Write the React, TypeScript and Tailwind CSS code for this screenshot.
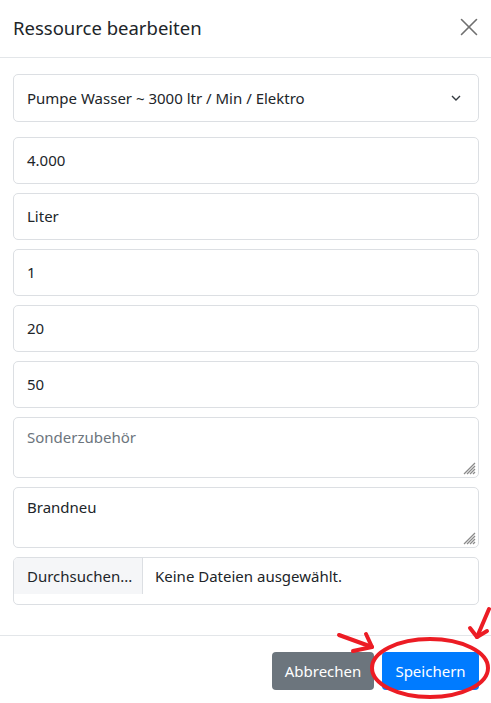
const fields = ["4.000", "Liter", "1", "20", "50"];

function ResizeGrip() {
  return (
    <svg className="absolute right-[2px] bottom-[2px]" width="14" height="14" viewBox="0 0 14 14">
      <g stroke="#8a8a8a" strokeWidth="1.2">
        <line x1="13" y1="2" x2="2" y2="13" />
        <line x1="13" y1="5" x2="5" y2="13" />
        <line x1="13" y1="8" x2="8" y2="13" />
        <line x1="13" y1="11" x2="11" y2="13" />
      </g>
    </svg>
  );
}

export default function App() {
  return (
    <div
      className="relative h-[703px] w-full overflow-hidden bg-white text-[#212529]"
      style={{ fontFamily: '"Noto Sans", "Open Sans", sans-serif' }}
    >
      {/* Header */}
      <div className="flex h-[58px] items-center justify-between border-b border-[#e3e6e9] pl-[13px] pr-[12px]">
        <h5 className="text-[18.5px] leading-none">Ressource bearbeiten</h5>
        <svg width="18" height="18" viewBox="0 0 18 18" className="mr-[1px] -mt-[4px]">
          <g stroke="#707070" strokeWidth="1.6" strokeLinecap="round">
            <line x1="1.5" y1="1.5" x2="16.5" y2="16.5" />
            <line x1="16.5" y1="1.5" x2="1.5" y2="16.5" />
          </g>
        </svg>
      </div>

      {/* Body */}
      <div className="pl-[13px] pr-[12px] pt-[16px] pb-[30px] text-[15px]">
        <div className="mb-[15px] flex h-[48px] items-center justify-between rounded-[5px] border border-[#dcdfe3] pl-[13px] pr-[17px]">
          <span>Pumpe Wasser ~ 3000 ltr / Min / Elektro</span>
          <svg width="10" height="6" viewBox="0 0 10 6">
            <path d="M1 1l4 4 4-4" fill="none" stroke="#343a40" strokeWidth="1.4" />
          </svg>
        </div>

        {fields.map((f) => (
          <div
            key={f}
            className="mb-[9px] flex h-[47px] items-center rounded-[5px] border border-[#dcdfe3] px-[13px]"
          >
            {f}
          </div>
        ))}

        <div className="relative mb-[9px] h-[61px] rounded-[5px] border border-[#dcdfe3] px-[13px] pt-[8px] text-[#6c757d]">
          Sonderzubehör
          <ResizeGrip />
        </div>
        <div className="relative mb-[9px] h-[61px] rounded-[5px] border border-[#dcdfe3] px-[13px] pt-[8px]">
          Brandneu
          <ResizeGrip />
        </div>

        <div className="h-[48px] overflow-hidden rounded-[5px] border border-[#dcdfe3]">
          <div className="flex h-[36px] items-center">
            <div className="flex h-full w-[129px] items-center border-r border-[#dcdfe3] bg-[#f5f6f8] pl-[13px]">
              Durchsuchen...
            </div>
            <span className="pl-[12px]">Keine Dateien ausgewählt.</span>
          </div>
        </div>
      </div>

      {/* Footer */}
      <div className="flex justify-end gap-[8px] border-t border-[#e3e6e9] pr-[12px] pt-[16px] text-[15px]">
        <button className="h-[38px] w-[102px] rounded-[4px] bg-[#6c757d] text-white">Abbrechen</button>
        <button className="h-[38px] w-[97px] rounded-[4px] bg-[#007bff] text-white">Speichern</button>
      </div>

      {/* Red annotation drawn over the screenshot */}
      <svg className="pointer-events-none absolute inset-0" width="491" height="703" viewBox="0 0 491 703">
        <g fill="none" stroke="#ec1c24" strokeWidth="4" strokeLinecap="round" strokeLinejoin="round">
          <ellipse cx="430" cy="668" rx="58" ry="29" />
          <line x1="339" y1="635" x2="372" y2="647" />
          <polyline points="366,634 372,647 353,651" />
          <line x1="489" y1="609" x2="477" y2="637" />
          <polyline points="470,628 477,637 487,631" />
        </g>
      </svg>
    </div>
  );
}
